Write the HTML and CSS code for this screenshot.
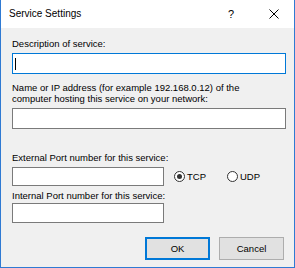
FILE: index.html
```html
<!DOCTYPE html>
<html>
<head>
<meta charset="utf-8">
<link rel="stylesheet" href="styles.css">
</head>
<body>
<div class="window">
  <div class="titlebar">
    <span class="title">Service Settings</span>
    <span class="help">?</span>
    <span class="close"><svg width="10" height="10" viewBox="0 0 10 10"><path d="M0.5 0.5 L9.5 9.5 M9.5 0.5 L0.5 9.5" stroke="#000" stroke-width="1" fill="none"/></svg></span>
  </div>
  <div class="content">
    <div class="lbl l1">Description of service:</div>
    <div class="input wide focused"><span class="caret"></span></div>
    <div class="lbl l2">Name or IP address (for example 192.168.0.12) of the<br>computer hosting this service on your network:</div>
    <div class="input wide i2"></div>
    <div class="lbl l3">External Port number for this service:</div>
    <div class="port-row">
      <div class="input short"></div>
      <div class="radio checked"><span class="dot"></span><span class="rtext">TCP</span></div>
      <div class="radio"><span class="dot"></span><span class="rtext">UDP</span></div>
    </div>
    <div class="lbl l4">Internal Port number for this service:</div>
    <div class="input short i4"></div>
    <div class="buttons">
      <button class="btn default">OK</button>
      <button class="btn">Cancel</button>
    </div>
  </div>
</div>
</body>
</html>
```
FILE: styles.css
```css
html, body {
  margin: 0;
  padding: 0;
  background: #ffffff;
}
.window {
  width: 295px;
  height: 268px;
  box-sizing: border-box;
  border: 1px solid #2f7ad3;
  border-top: none;
  background: #f0f0f0;
  font-family: "Liberation Sans", Arial, sans-serif;
  color: #000;
  display: flex;
  flex-direction: column;
}
.titlebar {
  height: 28px;
  background: #ffffff;
  display: flex;
  align-items: center;
  position: relative;
}
.title {
  font-size: 10px;
  margin-left: 8px;
  flex: 1;
  padding-bottom: 1px;
}
.help {
  font-size: 11px;
  width: 12px;
  margin-right: 29px;
  padding-bottom: 1px;
}
.close {
  width: 10px;
  height: 10px;
  margin-right: 15px;
  display: flex;
}
.content {
  padding: 10px 0 0 11px;
  display: flex;
  flex-direction: column;
  align-items: flex-start;
}
.lbl {
  font-size: 9.5px;
  line-height: 12px;
  white-space: nowrap;
}
.l2 { line-height: 11px; margin-top: 8px; }
.l3 { margin-top: 23px; }
.l4 { margin-top: 4px; }
.input {
  box-sizing: border-box;
  height: 21px;
  background: #ffffff;
  border: 1px solid #7a7a7a;
  display: flex;
  align-items: center;
}
.wide { width: 274px; margin-top: 3px; }
.i2 { margin-top: 4px; }
.focused { border-color: #0078d7; }
.caret {
  width: 1px;
  height: 12px;
  background: #000;
  margin-left: 2px;
}
.port-row {
  display: flex;
  align-items: center;
  margin-top: 3px;
}
.short { width: 152px; height: 19px; }
.i4 { margin-top: 1px; height: 20px; }
.radio {
  display: flex;
  align-items: center;
  font-size: 9.5px;
  margin-left: 10px;
}
.radio + .radio { margin-left: 21px; }
.dot {
  box-sizing: border-box;
  width: 11px;
  height: 11px;
  border: 1px solid #333333;
  border-radius: 50%;
  background: #ffffff;
  display: flex;
  align-items: center;
  justify-content: center;
}
.checked .dot::after {
  content: "";
  width: 5px;
  height: 5px;
  border-radius: 50%;
  background: #333333;
}
.rtext { margin-left: 2px; }
.buttons {
  display: flex;
  gap: 9px;
  margin-top: 14px;
  margin-left: 133px;
}
.btn {
  box-sizing: border-box;
  width: 65px;
  height: 23px;
  background: #e1e1e1;
  border: 1px solid #adadad;
  font-family: "Liberation Sans", Arial, sans-serif;
  font-size: 9.5px;
  color: #000;
  padding: 0;
  margin: 0;
}
.btn.default {
  border: 1px solid #0078d7;
  box-shadow: inset 0 0 0 1px #0078d7;
}
```
